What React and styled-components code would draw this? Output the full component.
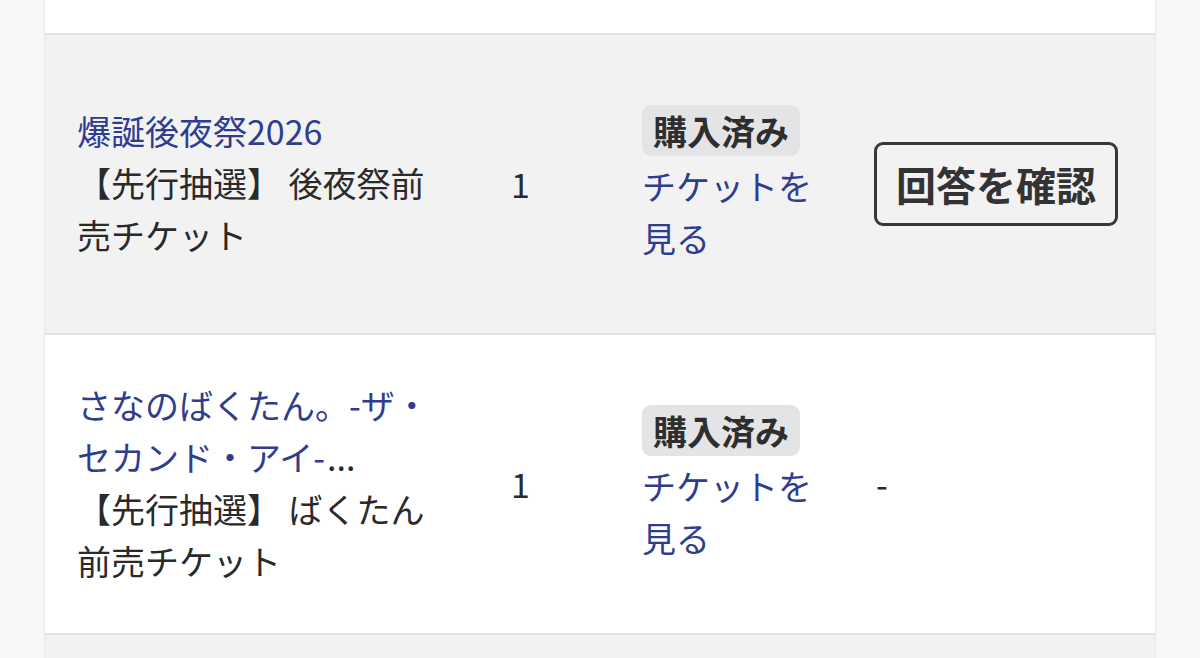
import React from "react";
import styled, { createGlobalStyle } from "styled-components";

const Global = createGlobalStyle`
  html, body {
    margin: 0;
    padding: 0;
    background: #f7f7f8;
    overflow: hidden;
  }
  body {
    font-family: "Noto Sans CJK JP", "Noto Sans", sans-serif;
    color: #2a2a2a;
  }
`;

const Page = styled.div`
  width: 1200px;
  height: 658px;
  padding-left: 44px;
  box-sizing: border-box;
  overflow: hidden;
`;

const Card = styled.div`
  width: 1112px;
  background: #ffffff;
  border-left: 1px solid #ebebed;
  border-right: 1px solid #ebebed;
  box-sizing: border-box;
`;

const TopSpacer = styled.div`
  height: 33px;
  background: #ffffff;
`;

const Row = styled.div`
  display: grid;
  grid-template-columns: 434px 131px 232px 1fr;
  align-items: center;
  height: 298px;
  padding-left: 32px;
  border-top: 2px solid #e1e2e6;
  background: ${(p) => (p.$shaded ? "#f2f2f3" : "#ffffff")};
  font-size: 34px;
  line-height: 52px;
`;

const NameCell = styled.div`
  padding-right: 69px;
  margin-top: -3px;
`;

const Title = styled.div`
  color: #2a2a2a;
`;

const TitleLink = styled.a`
  color: #2f3d8e;
  text-decoration: none;
`;

const Ellipsis = styled.span`
  margin-left: 2px;
  color: #2a2a2a;
`;

const SubText = styled.div`
  color: #2a2a2a;
`;

const QtyCell = styled.div`
  color: #2a2a2a;
`;

const StatusCell = styled.div`
  display: flex;
  flex-direction: column;
  align-items: flex-start;
  gap: 4px;
  padding-right: 40px;
`;

const Badge = styled.span`
  display: inline-block;
  background: #e4e4e6;
  color: #2e2e2e;
  font-weight: 700;
  font-size: 34px;
  line-height: 51px;
  padding: 0 11px;
  border-radius: 9px;
`;

const TicketLink = styled.a`
  color: #2f3d8e;
  text-decoration: none;
`;

const ActionCell = styled.div`
  display: flex;
  align-items: center;
`;

const AnswerButton = styled.button`
  font-family: "Noto Sans CJK JP", sans-serif;
  font-size: 40px;
  font-weight: 700;
  line-height: 58px;
  color: #333335;
  background: transparent;
  border: 3px solid #38383a;
  border-radius: 9px;
  padding: 10px 19px;
  cursor: pointer;
`;

const Dash = styled.span`
  color: #2a2a2a;
  padding-left: 2px;
`;

const rows = [
  {
    title: "爆誕後夜祭2026",
    truncated: false,
    sub: "【先行抽選】 後夜祭前売チケット",
    qty: 1,
    answer: true,
    shaded: true,
  },
  {
    title: "さなのばくたん。-ザ・セカンド・アイ-",
    truncated: true,
    sub: "【先行抽選】 ばくたん前売チケット",
    qty: 1,
    answer: false,
    shaded: false,
  },
];

export default function App() {
  return (
    <>
      <Global />
      <Page>
        <Card>
          <TopSpacer />
          {rows.map((r, i) => (
            <Row key={i} $shaded={r.shaded}>
              <NameCell>
                <Title>
                  <TitleLink href="#">
                    {r.title}
                    {r.truncated && <Ellipsis>...</Ellipsis>}
                  </TitleLink>
                </Title>
                <SubText>{r.sub}</SubText>
              </NameCell>
              <QtyCell>{r.qty}</QtyCell>
              <StatusCell>
                <Badge>購入済み</Badge>
                <TicketLink href="#">チケットを見る</TicketLink>
              </StatusCell>
              <ActionCell>
                {r.answer ? <AnswerButton>回答を確認</AnswerButton> : <Dash>-</Dash>}
              </ActionCell>
            </Row>
          ))}
          <Row $shaded />
        </Card>
      </Page>
    </>
  );
}
